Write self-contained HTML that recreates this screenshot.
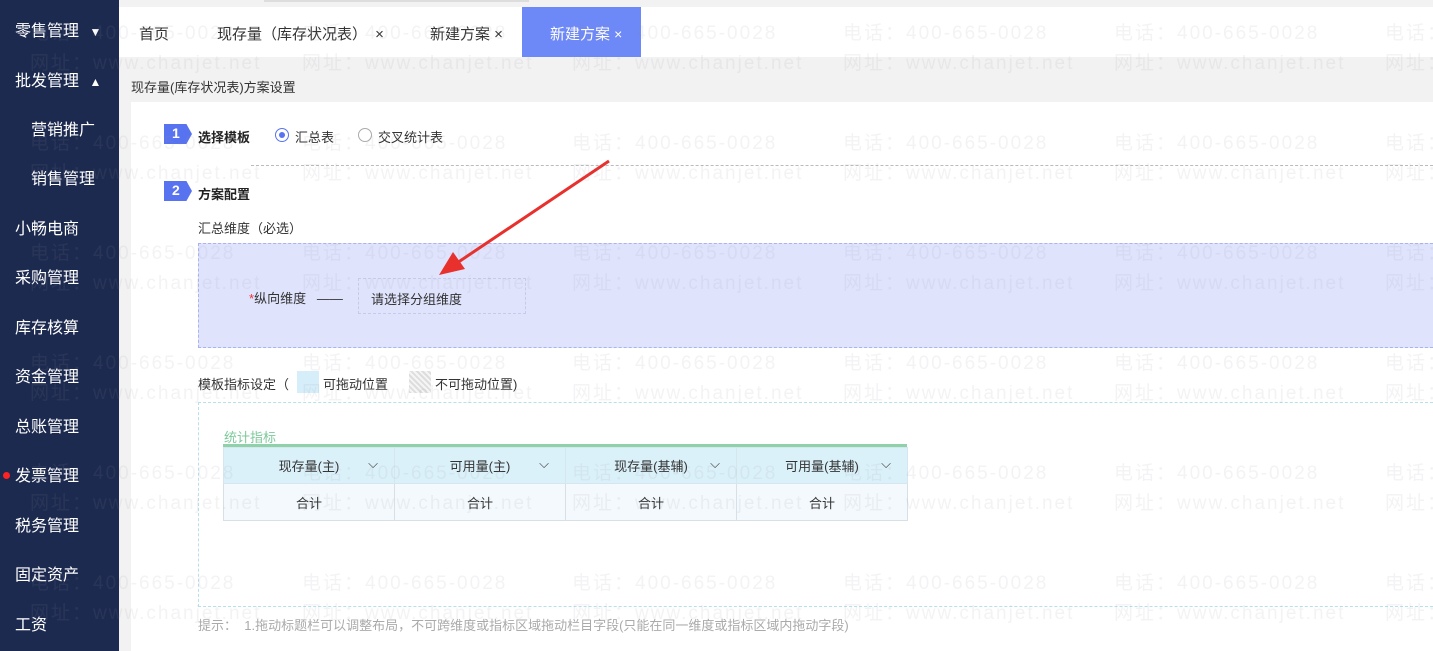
<!DOCTYPE html>
<html><head><meta charset="utf-8"><style>
*{margin:0;padding:0;box-sizing:border-box}
body{width:1433px;height:651px;overflow:hidden;position:relative;background:#f2f2f2;font-family:"Liberation Sans","Noto Sans CJK SC",sans-serif;font-size:14px;color:#333}
.side{position:absolute;left:0;top:0;width:119px;height:651px;background:#1d2a4f;color:#fff}
.side div{position:absolute;font-size:16px;left:15px}
.topbar{position:absolute;left:119px;top:0;width:1314px;height:7px;background:#f2f2f2}
.topbar i{position:absolute;left:145px;top:0;width:265px;height:2px;background:#ddd}
.tabs{position:absolute;left:119px;top:7px;width:1314px;height:50px;background:#fff}
.tab{position:absolute;top:16px;font-size:15px;color:#333}
.tab.act{top:0;height:50px;width:119px;left:403px;background:#6d88f7;color:#fff;padding:16px 0 0 28px}
.panel{position:absolute;left:131px;top:102px;width:1302px;height:549px;background:#fff}
.num{position:absolute;width:28px;height:20px;background:#5873f0;color:#fff;font-weight:bold;font-size:14px;padding:1px 0 0 8px;clip-path:polygon(0 0,80% 0,100% 50%,80% 100%,0 100%)}
.b{font-weight:bold;font-size:13px;color:#222}
.abs{position:absolute}
.wm{position:absolute;color:rgba(150,150,160,.11);font-size:19px;letter-spacing:2px;white-space:nowrap;pointer-events:none;z-index:10}
table{border-collapse:collapse;table-layout:fixed}
td{width:171px}
</style></head><body>
<div class="side">
<div style="top:17px">零售管理 <span style="font-size:12px;margin-left:6px">▼</span></div>
<div style="top:67px">批发管理 <span style="font-size:12px;margin-left:6px">▲</span></div>
<div style="top:116px;left:31px">营销推广</div>
<div style="top:165px;left:31px">销售管理</div>
<div style="top:215px">小畅电商</div>
<div style="top:264px">采购管理</div>
<div style="top:314px">库存核算</div>
<div style="top:363px">资金管理</div>
<div style="top:413px">总账管理</div>
<div style="top:462px">发票管理</div>
<span style="position:absolute;left:3px;top:472px;width:7px;height:7px;border-radius:50%;background:#f22"></span>
<div style="top:512px">税务管理</div>
<div style="top:561px">固定资产</div>
<div style="top:611px">工资</div>
</div>
<div class="topbar"><i></i></div>
<div class="tabs">
<div class="tab" style="left:20px">首页</div>
<div class="tab" style="left:98px">现存量（库存状况表） <span style="margin-left:4px">×</span></div>
<div class="tab" style="left:311px">新建方案 ×</div>
<div class="tab act">新建方案 <span style="font-size:14px">×</span></div>
</div>
<div class="abs" style="left:131px;top:77px;font-size:13px">现存量(库存状况表)方案设置</div>
<div class="panel">
<div class="num" style="left:33px;top:22px">1</div>
<div class="abs b" style="left:67px;top:25px">选择模板</div>
<div class="abs" style="left:144px;top:26px;width:14px;height:14px;border:1px solid #5873f0;border-radius:50%"><i style="position:absolute;left:3px;top:3px;width:6px;height:6px;border-radius:50%;background:#5873f0"></i></div>
<div class="abs" style="left:164px;top:25px;font-size:13px">汇总表</div>
<div class="abs" style="left:227px;top:26px;width:14px;height:14px;border:1px solid #aaa;border-radius:50%"></div>
<div class="abs" style="left:247px;top:25px;font-size:13px">交叉统计表</div>
<div class="abs" style="left:120px;top:63px;width:1182px;border-top:1px dashed #bbb"></div>
<div class="num" style="left:33px;top:79px">2</div>
<div class="abs b" style="left:67px;top:82px">方案配置</div>
<div class="abs" style="left:67px;top:116px;font-size:13px">汇总维度（必选）</div>
<div class="abs" style="left:67px;top:141px;width:1235px;height:105px;background:#dfe3fc;border:1px dashed #a9b4ee;border-right:none"></div>
<div class="abs" style="left:118px;top:186px;font-size:13px"><span style="color:#e33">*</span>纵向维度 &nbsp; ——</div>
<div class="abs" style="left:227px;top:176px;width:168px;height:36px;border:1px dashed #c5cbe8;font-size:13px;padding:10px 0 0 12px">请选择分组维度</div>
<div class="abs" style="left:67px;top:272px;font-size:13px">模板指标设定（</div>
<div class="abs" style="left:166px;top:269px;width:22px;height:22px;background:#d6eefa"></div>
<div class="abs" style="left:192px;top:272px;font-size:13px">可拖动位置</div>
<div class="abs" style="left:278px;top:269px;width:22px;height:22px;background:repeating-linear-gradient(45deg,#ddd 0 2px,#f5f5f5 2px 4px)"></div>
<div class="abs" style="left:304px;top:272px;font-size:13px">不可拖动位置)</div>
<div class="abs" style="left:67px;top:300px;width:1235px;height:205px;border:1px dashed #b6e0ea;border-right:none"></div>
<div class="abs" style="left:93px;top:325px;font-size:13px;color:#7cc99a">统计指标</div>
<div class="abs" style="left:92px;top:342px;width:684px;border-top:3px solid #8fd1a8"></div>
<table class="abs" style="left:92px;top:345px;width:684px;font-size:13px">
<tr style="height:36px;background:#dbf1fa">
<td style="border:1px solid #d6e6ee;text-align:center;position:relative">现存量(主)<span style="position:absolute;right:16px">⌵</span></td>
<td style="border:1px solid #d6e6ee;text-align:center;position:relative">可用量(主)<span style="position:absolute;right:16px">⌵</span></td>
<td style="border:1px solid #d6e6ee;text-align:center;position:relative">现存量(基辅)<span style="position:absolute;right:16px">⌵</span></td>
<td style="border:1px solid #d6e6ee;text-align:center;position:relative">可用量(基辅)<span style="position:absolute;right:16px">⌵</span></td></tr>
<tr style="height:37px;background:#f3f9fc">
<td style="border:1px solid #d6e0e6;text-align:center">合计</td><td style="border:1px solid #d6e0e6;text-align:center">合计</td><td style="border:1px solid #d6e0e6;text-align:center">合计</td><td style="border:1px solid #d6e0e6;text-align:center">合计</td></tr>
</table>
<div class="abs" style="left:67px;top:513px;font-size:13px;color:#aaa">提示： &nbsp;1.拖动标题栏可以调整布局，不可跨维度或指标区域拖动栏目字段(只能在同一维度或指标区域内拖动字段)</div>
<svg class="abs" style="left:300px;top:55px" width="190" height="125"><line x1="178" y1="4" x2="20" y2="110" stroke="#e8302c" stroke-width="3"/><polygon points="8,118 22,95 34,112" fill="#e8302c"/></svg>
</div>
<div id="wms"></div>
<script>
var h='';var xs=[30,302,572,843,1114,1385];var ys=[30,140,250,360,470,580];
ys.forEach(function(y){xs.forEach(function(x){h+='<div class="wm" style="left:'+x+'px;top:'+(y-12)+'px">电话：400-665-0028</div><div class="wm" style="left:'+x+'px;top:'+(y+18)+'px">网址：www.chanjet.net</div>';});});
document.getElementById('wms').innerHTML=h;
</script>
</body></html>
